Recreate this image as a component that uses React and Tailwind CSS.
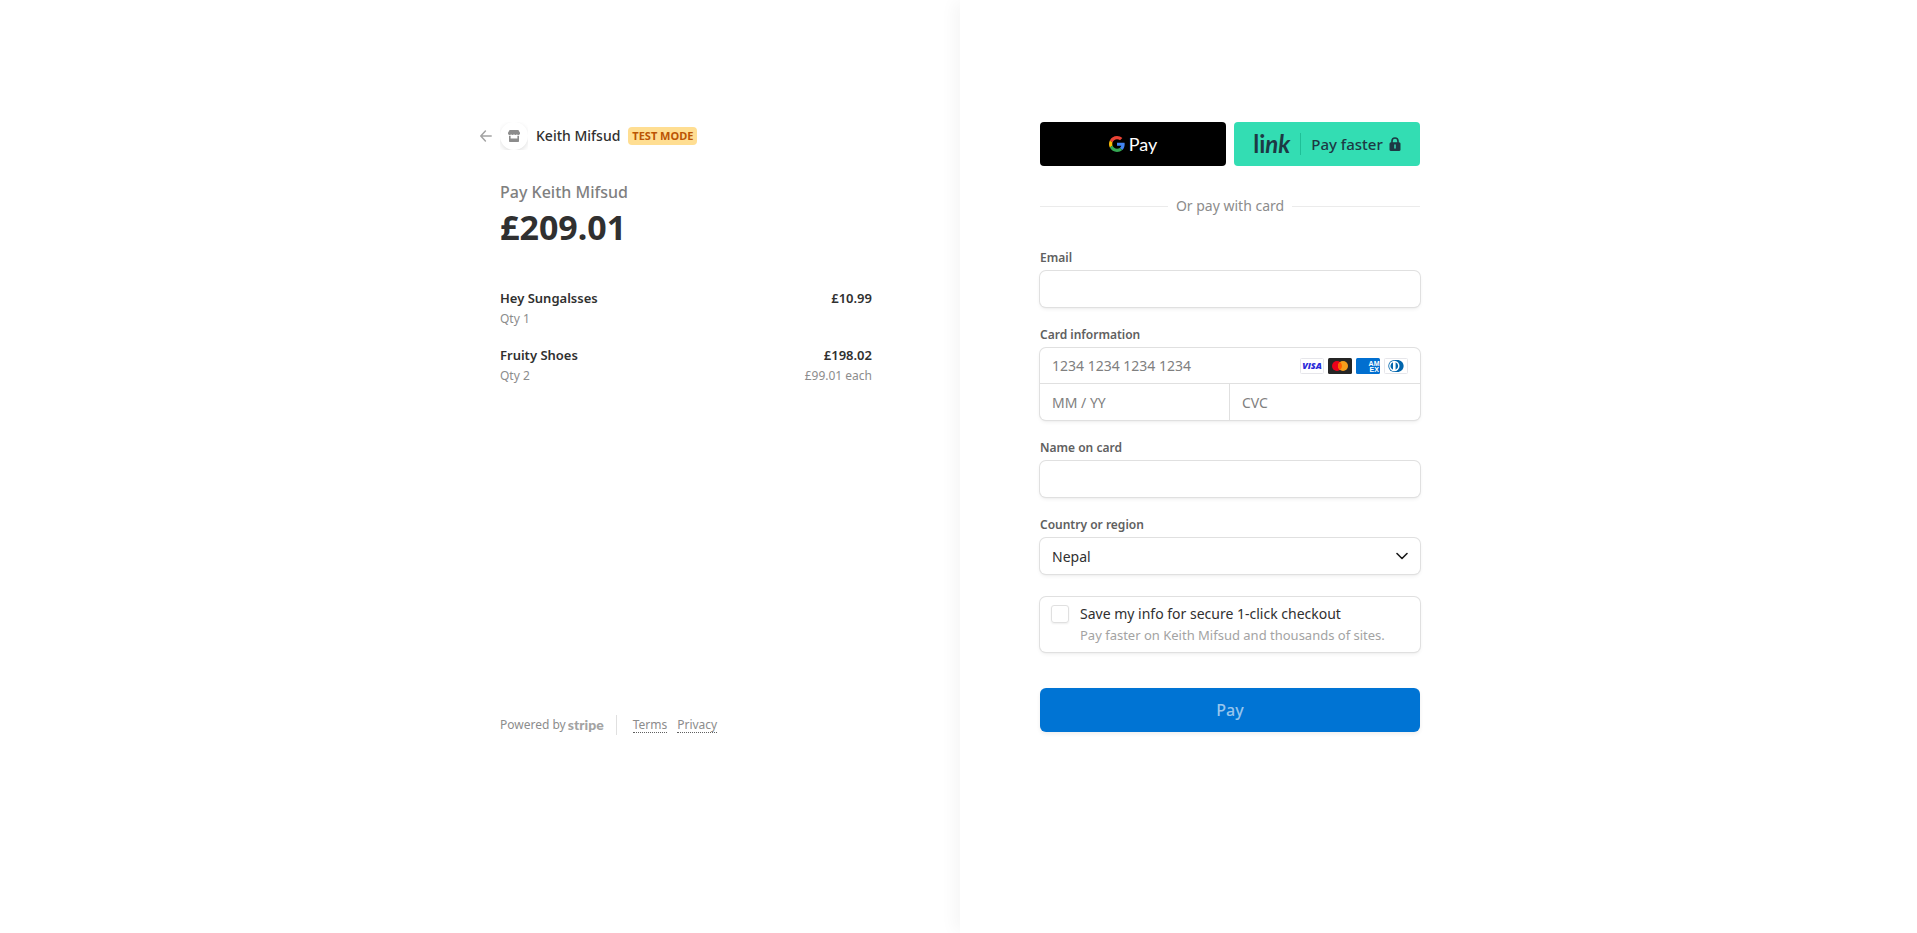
import React, { useState } from 'react'

const items = [
  { id: 1, name: 'Hey Sungalsses', qty: 1, total: '£10.99' },
  { id: 2, name: 'Fruity Shoes', qty: 2, total: '£198.02', each: '£99.01 each' },
]

// shared look of the boxes in the form
const box = 'bg-white rounded-md shadow-[0_0_0_1px_#e0e0e0,0_2px_4px_0_rgba(0,0,0,0.07),0_1px_2px_0_rgba(0,0,0,0.05)]'
const input = 'block w-full px-3 text-[14px] text-[#303030] placeholder:text-[#808080] bg-transparent outline-none'
const label = 'block mb-[5px] text-[12px] leading-4 font-semibold text-[#606060]'

function GoogleG() {
  return (
    <svg viewBox="0 0 48 48" className="w-4 h-4" aria-hidden="true">
      <path fill="#EA4335" d="M24 9.5c3.54 0 6.71 1.22 9.21 3.6l6.85-6.85C35.9 2.38 30.47 0 24 0 14.62 0 6.51 5.38 2.56 13.22l7.98 6.19C12.43 13.72 17.74 9.5 24 9.5z" />
      <path fill="#4285F4" d="M46.98 24.55c0-1.57-.15-3.09-.38-4.55H24v9.02h12.94c-.58 2.96-2.26 5.48-4.78 7.18l7.73 6c4.51-4.18 7.09-10.36 7.09-17.65z" />
      <path fill="#FBBC05" d="M10.53 28.59c-.48-1.45-.76-2.99-.76-4.59s.27-3.14.76-4.59l-7.98-6.19C.92 16.46 0 20.12 0 24c0 3.88.92 7.54 2.56 10.78l7.97-6.19z" />
      <path fill="#34A853" d="M24 48c6.48 0 11.93-2.13 15.89-5.81l-7.73-6c-2.15 1.45-4.92 2.3-8.16 2.3-6.26 0-11.57-4.22-13.47-9.91l-7.98 6.19C6.51 42.62 14.62 48 24 48z" />
    </svg>
  )
}

function CardBrands() {
  return (
    <div className="flex gap-1 pr-3">
      {/* visa */}
      <svg viewBox="0 0 24 16" className="w-6 h-4">
        <rect x="0.5" y="0.5" width="23" height="15" rx="1" fill="#fff" stroke="#e6e6ea" />
        <text x="12" y="11.4" textAnchor="middle" fontFamily="Open Sans, sans-serif" fontSize="9" fontWeight="800" fontStyle="italic" fill="#2a2ad8">VISA</text>
      </svg>
      {/* mastercard */}
      <svg viewBox="0 0 24 16" className="w-6 h-4">
        <rect width="24" height="16" rx="1.5" fill="#252525" />
        <circle cx="9" cy="8" r="5" fill="#eb001b" />
        <circle cx="15" cy="8" r="5" fill="#f79e1b" />
        <path d="M12 4a5 5 0 0 0 0 8 5 5 0 0 0 0-8z" fill="#ff5f00" />
      </svg>
      {/* amex */}
      <svg viewBox="0 0 24 16" className="w-6 h-4">
        <rect width="24" height="16" rx="1.5" fill="#016fd0" />
        <text x="12.6" y="8.2" fontFamily="Liberation Sans, sans-serif" fontSize="7" fontWeight="700" fill="#fff">AM</text>
        <text x="13.6" y="13.8" fontFamily="Liberation Sans, sans-serif" fontSize="7" fontWeight="700" fill="#fff">EX</text>
      </svg>
      {/* diners */}
      <svg viewBox="0 0 24 16" className="w-6 h-4">
        <rect x="0.5" y="0.5" width="23" height="15" rx="1" fill="#fff" stroke="#e6e6ea" />
        <path d="M10 2h3.2c3.6 0 6.4 2.6 6.4 6s-2.8 6-6.4 6H10z" fill="#0165ac" />
        <circle cx="10.3" cy="8" r="6" fill="#0165ac" />
        <circle cx="10.3" cy="8" r="5.2" fill="#fff" />
        <path d="M9 4.2a4.1 4.1 0 0 0 0 7.6zM11.6 4.2v7.6a4.1 4.1 0 0 0 0-7.6z" fill="#0165ac" />
      </svg>
    </div>
  )
}

function Summary() {
  return (
    <div className="w-[372px] flex flex-col h-[613px]">
      <header className="flex items-center h-7 -ml-5">
        <button aria-label="Back" className="w-5">
          <svg viewBox="0 0 12 12" className="w-3 h-3" fill="none" stroke="#a3a3a3" strokeWidth="1.5" strokeLinecap="round" strokeLinejoin="round">
            <path d="M11.2 6H1M5.4 1L.8 6l4.6 5" />
          </svg>
        </button>
        {/* the clip cuts the shadow off at the edges of the logo */}
        <div className="overflow-hidden">
          <div className="w-7 h-7 rounded-full bg-white flex items-center justify-center shadow-[0_2px_5px_rgba(0,0,0,0.12)]">
            <svg viewBox="0 0 12 12" className="w-3 h-3" fill="#8c8c8c">
              <path d="M1.600 0h8.800L12 2.800v.8c0 .9-.7 1.400-1.500 1.400S9 4.500 9 4.200C8.800 4.700 8.200 5 7.500 5S6.200 4.700 6 4.200C5.800 4.700 5.200 5 4.500 5S3.200 4.700 3 4.200C3 4.500 2.300 5 1.500 5S0 4.500 0 3.600v-.8z" />
              <path d="M1 5.800h1.600v2.700h6.800V5.800H11v5.200c0 .6-.4 1-1 1H2c-.6 0-1-.4-1-1z" />
            </svg>
          </div>
        </div>
        <h1 className="ml-2 text-[14px] leading-5 font-medium text-[#303030]">Keith Mifsud</h1>
        <span className="ml-2 px-1 rounded bg-[#ffde92] text-[#bb5504] text-[11px] leading-[18px] font-bold">TEST MODE</span>
      </header>

      <p className="mt-[30px] text-[16px] leading-6 font-medium text-[#808080]">Pay Keith Mifsud</p>
      <p className="text-[34px] leading-[46px] font-bold text-[#303030]">£209.01</p>

      <ul className="mt-[38px] flex flex-col gap-[15px]">
        {items.map((item) => (
          <li key={item.id}>
            <div className="flex justify-between text-[13px] leading-5 font-semibold text-[#303030]">
              <span>{item.name}</span>
              <span>{item.total}</span>
            </div>
            <div className="flex justify-between text-[12px] leading-[22px] text-[#8c8c8c]">
              <span>Qty {item.qty}</span>
              {item.each && <span>{item.each}</span>}
            </div>
          </li>
        ))}
      </ul>

      <footer className="mt-auto flex items-center h-5 text-[12px] text-[#8c8c8c]">
        <span>Powered by</span>
        <span className="ml-[2px] font-['Lato',sans-serif] text-[14px] leading-4 font-black text-[#a3a3a3]">stripe</span>
        <span className="ml-3 w-px h-5 bg-[#e0e0e0]"></span>
        <a href="#terms" className="ml-4 leading-[14px] border-b border-dotted border-[#606060]">Terms</a>
        <a href="#privacy" className="ml-[10px] leading-[14px] border-b border-dotted border-[#606060]">Privacy</a>
      </footer>
    </div>
  )
}

function PaymentForm() {
  const [save, setSave] = useState(false)

  return (
    <form className="w-[380px]" onSubmit={(e) => e.preventDefault()}>
      {/* express checkout */}
      <div className="grid grid-cols-2 gap-2">
        <button type="button" aria-label="Google Pay" className="h-11 rounded bg-black text-white flex items-center justify-center gap-1">
          <GoogleG />
          <span className="font-['Lato',sans-serif] text-[18px] leading-6">Pay</span>
        </button>
        <button type="button" className="h-11 rounded bg-[#33ddb3] text-[#1d3944] flex items-center justify-center">
          <span className="font-['Lato',sans-serif] text-[24px] leading-6 font-bold">li<i>nk</i></span>
          <span className="ml-[10px] mr-[10px] w-px h-[22px] bg-[#1fbf97]"></span>
          <span className="text-[15px] font-medium">Pay faster</span>
          <svg viewBox="0 0 12 14" className="ml-1.5 w-3 h-3.5">
            <path d="M3 6V4a3 3 0 0 1 6 0v2" fill="none" stroke="currentColor" strokeWidth="1.6" />
            <rect x="0.500" y="5.300" width="11" height="8.700" rx="1.500" fill="currentColor" />
            <path d="M6 8v3" stroke="#33ddb3" strokeWidth="1.500" strokeLinecap="round" />
          </svg>
        </button>
      </div>

      <div className="mt-[30px] mb-[34px] flex items-center gap-2">
        <hr className="flex-1 border-[#ebebeb]" />
        <p className="text-[14px] leading-5 text-[#8c8c8c]">Or pay with card</p>
        <hr className="flex-1 border-[#ebebeb]" />
      </div>

      <div className="flex flex-col gap-5">
        <div>
          <label htmlFor="email" className={label}>Email</label>
          <div className={box}><input id="email" type="email" className={input + ' h-9'} /></div>
        </div>

        <fieldset>
          <legend className={label}>Card information</legend>
          <div className={box}>
            <div className="flex items-center border-b border-[#e0e0e0]">
              <input aria-label="Card number" placeholder="1234 1234 1234 1234" className={input + ' h-[35px]'} />
              <CardBrands />
            </div>
            <div className="grid grid-cols-2 divide-x divide-[#e0e0e0]">
              <input aria-label="Expiry" placeholder="MM / YY" className={input + ' h-9'} />
              <input aria-label="CVC" placeholder="CVC" className={input + ' h-9'} />
            </div>
          </div>
        </fieldset>

        <div>
          <label htmlFor="name" className={label}>Name on card</label>
          <div className={box}><input id="name" type="text" className={input + ' h-9'} /></div>
        </div>

        <div>
          <label htmlFor="country" className={label}>Country or region</label>
          <div className={box + ' relative'}>
            <select id="country" className={input + ' h-9 appearance-none'}>
              <option>Nepal</option>
            </select>
            <svg viewBox="0 0 12 12" className="absolute right-3 top-3 w-3 h-3 pointer-events-none" fill="none" stroke="#1a1a1a" strokeWidth="1.600" strokeLinecap="round" strokeLinejoin="round">
              <path d="M1 3.500l5 5 5-5" />
            </svg>
          </div>
        </div>
      </div>

      <div className={box + ' mt-[23px] pl-[11px] py-2 flex gap-[11px]'}>
        <input
          id="save"
          type="checkbox"
          checked={save}
          onChange={(e) => setSave(e.target.checked)}
          className="appearance-none w-[18px] h-[18px] rounded-[3px] border border-[#e0e0e0] shadow-[0_1px_2px_rgba(0,0,0,0.07)] checked:bg-[#0074d4]"
        />
        <div>
          <label htmlFor="save" className="block text-[14px] leading-[18px] text-[#303030]">Save my info for secure 1-click checkout</label>
          <p className="mt-1 text-[13px] leading-[17px] text-[#a3a3a3]">Pay faster on Keith Mifsud and thousands of sites.</p>
        </div>
      </div>

      <button type="submit" className="mt-9 w-full h-11 rounded-md bg-[#0074d4] text-[16px] font-medium text-white/60 shadow-[0_2px_4px_rgba(0,0,0,0.07)]">Pay</button>
    </form>
  )
}

export default function App() {
  return (
    <div className="grid grid-cols-2 min-h-screen pl-[3px] bg-white font-['Noto_Sans',sans-serif]">
      <section className="flex justify-end pr-[88px] pt-[122px]">
        <Summary />
      </section>
      <main className="pl-20 pt-[122px] shadow-[-8px_0_15px_-2px_rgba(0,0,0,0.04)]">
        <PaymentForm />
      </main>
    </div>
  )
}
